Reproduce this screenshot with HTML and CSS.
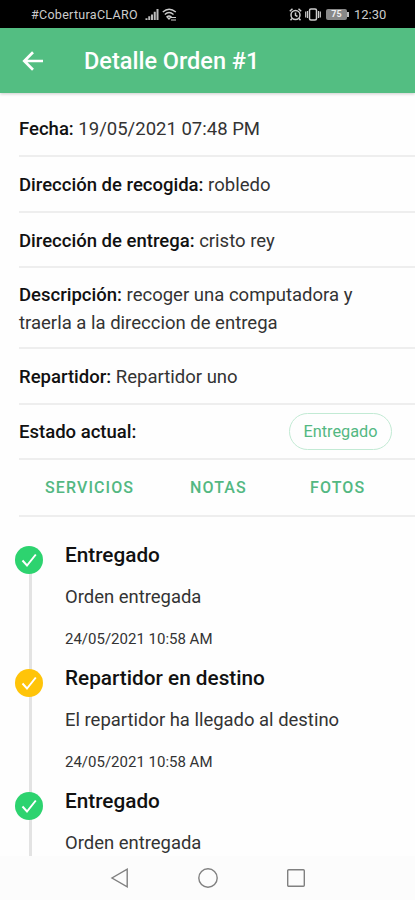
FILE: index.html
```html
<!DOCTYPE html>
<html lang="es">
  <head>
    <meta charset="UTF-8" />
    <meta name="viewport" content="width=device-width, initial-scale=1" />
    <title>Detalle Orden #1</title>
    <link rel="stylesheet" href="styles.css">
  </head>
  <body>
    <div class="status-bar">
      <span class="carrier">#CoberturaCLARO</span>
      <svg class="signal" width="14" height="11" viewBox="0 0 14 12">
        <path d="M1 12v-2M4 12V8M7 12V6M10 12V3M13 12V0" stroke="#bbb" stroke-width="2.2" />
      </svg>
      <svg class="wifi" width="15" height="13" viewBox="0 0 15 13" fill="none" stroke="#ccc" stroke-width="1.4">
        <path d="M.8 4Q7-1.5 13.8 4M2.8 6.5Q7 2.7 11.5 6.500M5 8.8Q7 7 9 8.800L7 11z" />
        <path d="M9 9.5h5M9 12h5" stroke-width="1.2" />
      </svg>
      <svg class="alarm" width="13" height="13" viewBox="0 0 13 13" fill="none" stroke="#ccc" stroke-width="1.5">
        <circle cx="6.5" cy="7" r="4.5" />
        <path d="M6.5 4.5V7.3L8.5 8.5M.8 3.3L3.5.8M12.2 3.3L9.5.8M3 10.5L1.5 12.3M10 10.5L11.5 12.3" />
      </svg>
      <svg class="vibrate" width="16" height="13" viewBox="0 0 16 13" fill="none" stroke="#ccc" stroke-width="1.5">
        <rect x="4.5" y="1" width="7" height="11" rx="1.5" />
        <path d="M2.5 3v7M.7 3.5v6M13.5 3v7M15.3 3.5v6" stroke-width="1.2" />
      </svg>
      <span class="battery">75</span>
      <span class="time">12:30</span>
    </div>

    <header>
      <svg width="22" height="20" viewBox="0 0 22 20" fill="none" stroke="#fff" stroke-width="2.7">
        <path d="M21 10H2.5M11 1.3L2.3 10L11 18.7" />
      </svg>
      <h1>Detalle Orden #1</h1>
    </header>

    <main>
      <div class="item-list">
        <p class="item first"><b>Fecha:</b> 19/05/2021 07:48 PM</p>
        <p class="item"><b>Dirección de recogida:</b> robledo</p>
        <p class="item"><b>Dirección de entrega:</b> cristo rey</p>
        <p class="item tall"><b>Descripción:</b> recoger una computadora y<br>traerla a la direccion de entrega</p>
        <p class="item"><b>Repartidor:</b> Repartidor uno</p>
        <div class="item estado">
          <b>Estado actual:</b>
          <span class="chip">Entregado</span>
        </div>
        <div class="item tabs">
          <a>SERVICIOS</a>
          <a>NOTAS</a>
          <a>FOTOS</a>
        </div>
      </div>

      <div class="timeline">
        <div class="step">
          <div class="rail">
            <svg class="dot green" viewBox="0 0 28 28"><path d="M7.5 14.5L12 19.5L20.8 8.5" /></svg>
          </div>
          <div class="step-content">
            <h2>Entregado</h2>
            <p>Orden entregada</p>
            <small>24/05/2021 10:58 AM</small>
          </div>
        </div>
        <div class="step">
          <div class="rail">
            <svg class="dot yellow" viewBox="0 0 28 28"><path d="M7.5 14.5L12 19.5L20.8 8.5" /></svg>
          </div>
          <div class="step-content">
            <h2>Repartidor en destino</h2>
            <p>El repartidor ha llegado al destino</p>
            <small>24/05/2021 10:58 AM</small>
          </div>
        </div>
        <div class="step">
          <div class="rail">
            <svg class="dot green" viewBox="0 0 28 28"><path d="M7.5 14.5L12 19.5L20.8 8.5" /></svg>
          </div>
          <div class="step-content">
            <h2>Entregado</h2>
            <p>Orden entregada</p>
          </div>
        </div>
      </div>
    </main>

    <div class="nav-bar">
      <svg width="20" height="20" viewBox="0 0 20 20"><path d="M17.2 1.2V18.8L2 10z" /></svg>
      <svg width="20" height="20" viewBox="0 0 20 20"><circle cx="10" cy="10" r="9.2" /></svg>
      <svg width="20" height="20" viewBox="0 0 20 20"><rect x="1.7" y="1.7" width="16.6" height="16.6" rx="1" /></svg>
    </div>
  </body>
</html>
```
FILE: styles.css
```css
* {
  margin: 0;
  padding: 0;
  box-sizing: border-box;
}
body {
  width: 415px;
  height: 900px;
  overflow: hidden;
  display: flex;
  flex-direction: column;
  font-family: Roboto, sans-serif;
  background: #fefefe;
  color: #333;
}

/* Status bar */
.status-bar {
  height: 28px;
  flex: none;
  display: flex;
  align-items: center;
  padding: 1px 29px 0 31px;
  background: #000;
  color: #ccc;
  font-size: 12px;
}
.carrier {
  width: 108px;
  font-size: 12.5px;
  letter-spacing: 0.3px;
  white-space: nowrap;
}
.signal {
  margin-left: 6px;
}
.wifi {
  margin-left: 3px;
}
.alarm {
  margin-left: auto;
}
.vibrate {
  margin-left: 3px;
}
.battery {
  position: relative;
  width: 21px;
  height: 11px;
  margin: 0 7px 0 5px;
  border-radius: 2px;
  background: #888;
  color: #eee;
  font-size: 9px;
  font-weight: 700;
  line-height: 11px;
  text-align: center;
}
.battery::after {
  content: "";
  position: absolute;
  left: 21px;
  top: 3px;
  width: 2px;
  height: 5px;
  background: #bbb;
}
.time {
  font-size: 13px;
  width: 32px;
}

header {
  height: 65px;
  flex: none;
  display: flex;
  align-items: center;
  gap: 40px;
  padding-left: 22px;
  background: #53be82;
  box-shadow: 0 1px 3px rgba(0, 0, 0, 0.2);
}
h1 {
  margin-top: 1px;
  color: #fff;
  font-size: 23.5px;
  font-weight: 500;
}

main {
  flex: 1;
  overflow: hidden;
}

/* Order data */
.item-list {
  padding-left: 19px;
}
.item {
  height: 55.5px;
  padding: 15px 40px 0 0;
  border-bottom: 2px solid #eee;
  font-size: 18.53px;
  line-height: 27.5px;
}
.item b {
  color: #111;
  font-weight: 500;
}
.item.first {
  height: 64px;
  padding-top: 23px;
}
.item.tall {
  height: 81px;
  padding-top: 14px;
}
.item.estado {
  display: flex;
  align-items: center;
  justify-content: space-between;
  padding: 1px 23px 0 0;
}
.estado b {
  padding-top: 2px;
}
.chip {
  width: 103px;
  height: 37px;
  border: 1px solid #c2ead4;
  border-radius: 19px;
  color: #53b882;
  font-size: 16.3px;
  line-height: 35px;
  text-align: center;
}
.item.tabs {
  display: flex;
  height: 57px;
  padding: 14px 0 0 26px;
  color: #53b882;
  font-size: 16px;
  font-weight: 500;
  letter-spacing: 1.1px;
}
.tabs a {
  flex: none;
  width: 145px;
}
.tabs a + a {
  width: 120px;
}

/* Timeline */
.timeline {
  padding: 24px 0 0 15px;
}
.step {
  display: flex;
  gap: 22px;
  height: 123px;
}
.rail {
  position: relative;
  width: 28px;
  padding-top: 5px;
}
.rail::before {
  content: "";
  position: absolute;
  left: 14px;
  top: 20px;
  width: 3px;
  height: 123px;
  background: #e3e3e3;
}
.dot {
  position: relative;
  z-index: 1;
  display: block;
  width: 28px;
  height: 28px;
  border-radius: 50%;
  fill: none;
  stroke: #fff;
  stroke-width: 2;
}
.green {
  background: #2dd36f;
}
.yellow {
  background: #ffc409;
}
h2 {
  color: #111;
  font-size: 20.75px;
  font-weight: 500;
  line-height: 28px;
}
.step-content p {
  margin-top: 14px;
  font-size: 18.45px;
  line-height: 28px;
}
.step-content small {
  display: block;
  margin-top: 18px;
  font-size: 15px;
  line-height: 20px;
}

/* Android buttons */
.nav-bar {
  position: relative;
  z-index: 2;
  height: 44px;
  flex: none;
  display: flex;
  justify-content: center;
  gap: 68px;
  padding-top: 12px;
  background: #fcfcfc;
}
.nav-bar svg {
  fill: none;
  stroke: #808080;
  stroke-width: 1.4;
}
```
